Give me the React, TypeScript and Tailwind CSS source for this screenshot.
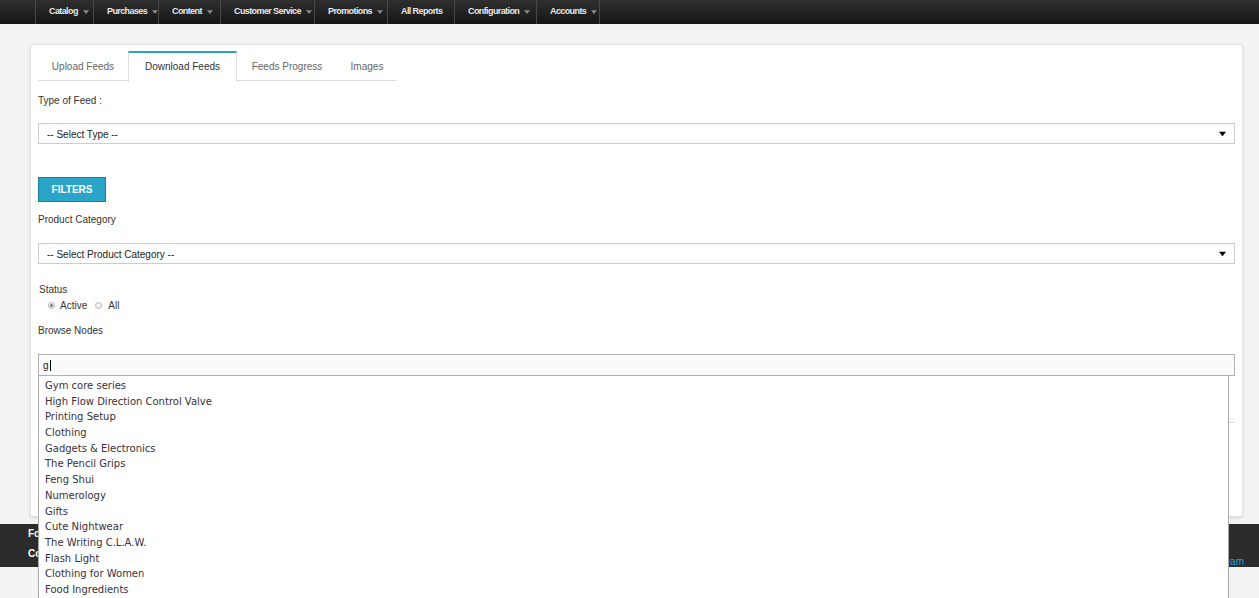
const navItems = [
  { label: "Catalog", arrow: true, w: "w-[58px]" },
  { label: "Purchases", arrow: true, w: "w-[65px]" },
  { label: "Content", arrow: true, w: "w-[62px]" },
  { label: "Customer Service", arrow: true, w: "w-[94px]" },
  { label: "Promotions", arrow: true, w: "w-[73px]" },
  { label: "All Reports", arrow: false, w: "w-[67px]" },
  { label: "Configuration", arrow: true, w: "w-[82px]" },
  { label: "Accounts", arrow: true, w: "w-[64px]" },
];

const tabs = [
  { label: "Upload Feeds", w: "w-[90px]" },
  { label: "Download Feeds", w: "w-[109px]" },
  { label: "Feeds Progress", w: "w-[100px]" },
  { label: "Images", w: "w-[60px]" },
];

const nodes = [
  "Gym core series",
  "High Flow Direction Control Valve",
  "Printing Setup",
  "Clothing",
  "Gadgets & Electronics",
  "The Pencil Grips",
  "Feng Shui",
  "Numerology",
  "Gifts",
  "Cute Nightwear",
  "The Writing C.L.A.W.",
  "Flash Light",
  "Clothing for Women",
  "Food Ingredients",
  "Gardening Tools",
];

const Caret = ({ className }: { className?: string }) => (
  <svg viewBox="0 0 8 5" className={className} fill="currentColor">
    <path d="M0 0h8L4 5z" />
  </svg>
);

const SelectBox = ({ text }: { text: string }) => (
  <div className="relative h-[21px] w-full border border-[#cccccc] bg-white flex items-center pl-[8px] pt-[1px] text-[10px] text-[#222]">
    {text}
    <Caret className="absolute right-[8px] top-[7px] w-[7px] h-[6px] text-black" />
  </div>
);

const Radio = ({ checked }: { checked?: boolean }) => (
  <span className="w-[7px] h-[7px] rounded-full border border-[#b5b5b5] bg-[#f2f2f2] flex items-center justify-center">
    {checked && <span className="w-[3px] h-[3px] rounded-full bg-[#777]" />}
  </span>
);

export default function App() {
  return (
    <div className="min-h-screen bg-[#f3f3f3] font-['Liberation_Sans',Arial,sans-serif] text-[#333]">
      <nav className="h-[24px] bg-gradient-to-b from-[#2f2f2f] to-[#161616] flex pl-[35px]">
        {navItems.map((item, i) => (
          <div
            key={item.label}
            className={
              "h-full flex items-center pl-[13px] pb-[1px] border-l border-[#474747] whitespace-nowrap " +
              item.w +
              (i === navItems.length - 1 ? " border-r" : "")
            }
          >
            <span className="text-[9px] font-bold tracking-[-0.6px] text-[#e8e8e8]">{item.label}</span>
            {item.arrow && <Caret className="ml-[5px] w-[6px] h-[4px] text-[#8a8a8a]" />}
          </div>
        ))}
      </nav>

      <main className="pl-[30px] pr-[16px] pt-[20px]">
        <div className="h-[473px] bg-white border border-[#e2e2e2] rounded-[3px] shadow-[0_1px_3px_rgba(0,0,0,0.12)] px-[7px] pt-[6px]">
          <ul className="flex w-[359px] h-[30px] border-b border-[#dddddd]">
            {tabs.map((t) => {
              const active = t.label === "Download Feeds";
              return (
                <li
                  key={t.label}
                  className={
                    "flex items-center justify-center whitespace-nowrap text-[10px] " +
                    t.w +
                    (active
                      ? " h-[31px] mb-[-1px] pb-[2px] bg-white border-t-2 border-t-[#2aa3c9] border-x border-x-[#dddddd] text-[#333]"
                      : " h-[30px] text-[#666]")
                  }
                >
                  {t.label}
                </li>
              );
            })}
          </ul>

          <div className="mt-[14px] leading-[12px] text-[10px] text-[#333]">Type of Feed :</div>
          <div className="mt-[16px]">
            <SelectBox text="-- Select Type --" />
          </div>

          <button
            type="button"
            className="mt-[33px] h-[25px] w-[68px] bg-[#2ba4c9] border border-[#1d7a98] text-white text-[10px] font-bold block"
          >
            FILTERS
          </button>

          <div className="mt-[12px] leading-[12px] text-[10px] text-[#333]">Product Category</div>
          <div className="mt-[17px]">
            <SelectBox text="-- Select Product Category --" />
          </div>

          <div className="mt-[20px] leading-[12px] text-[10px] text-[#333] pl-[1px]">Status</div>
          <div className="mt-[3px] h-[12px] flex items-center pl-[10px] text-[10px] text-[#333]">
            <Radio checked />
            <span className="ml-[5px]">Active</span>
            <span className="ml-[8px]">
              <Radio />
            </span>
            <span className="ml-[6px]">All</span>
          </div>

          <div className="mt-[14px] leading-[12px] text-[10px] text-[#333]">Browse Nodes</div>

          <div className="relative mt-[17px]">
            <div className="h-[22px] border border-[#b3b3b3] bg-[#fafafa] flex items-center pl-[4px] text-[10px] text-[#222]">
              g<span className="w-px h-[11px] bg-black ml-px" />
            </div>
            <ul className="absolute left-0 top-[22px] w-[1191px] bg-white border-x border-[#a9a9a9] pt-[2px] z-10 font-['DejaVu_Sans',Verdana,sans-serif] text-[10px] text-[#3a2f3a]">
              {nodes.map((n) => (
                <li key={n} className="h-[15.7px] leading-[15.7px] pl-[6px] whitespace-nowrap">
                  {n}
                </li>
              ))}
            </ul>
          </div>

          <div className="mt-[46px] h-px bg-[#dddddd]" />
        </div>
      </main>

      <footer className="mt-[7px] h-[43px] bg-[#2b2b2b] px-[28px] pt-[3px] text-[10px] text-white font-bold">
        <div className="leading-[14px]">Follow Us :</div>
        <div className="leading-[14px] mt-[6px] flex justify-between items-start">
          <span>Copyright © 2016 All rights reserved.</span>
          <span className="font-normal text-[#27a3d6] mr-[-13px] mt-[8px]">Powered by Shopping Team</span>
        </div>
      </footer>
    </div>
  );
}
